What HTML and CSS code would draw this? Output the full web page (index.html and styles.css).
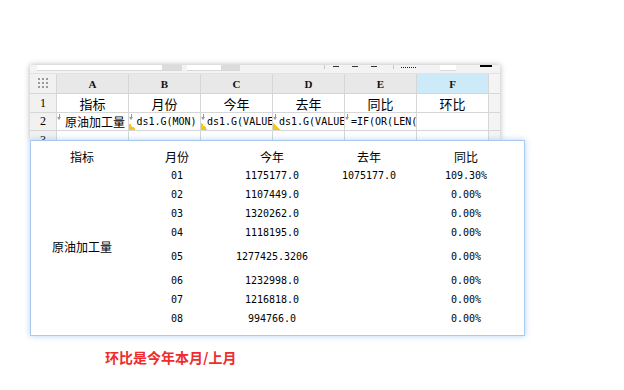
FILE: index.html
```html
<!DOCTYPE html>
<html lang="zh">
<head>
    <meta charset="UTF-8">
    <title>环比</title>
    <link rel="stylesheet" href="styles.css">
</head>
<body>

    <!-- designer screenshot -->
    <div class="sheet">
        <div class="toolbar">
            <span class="tb-input w125"></span><span class="tb-scroll w20"></span>
            <span class="tb-input w34 gap5"></span><span class="tb-scroll w19"></span>
            <span class="tb-sep gap84"></span>
            <span class="tb-dash gap8"></span><span class="tb-dash gap13"></span><span class="tb-dash gap13"></span>
            <span class="tb-sep gap16"></span>
            <span class="tb-dots gap7"></span>
            <span class="tb-input w16 gap24"></span>
            <span class="tb-black gap24"></span>
        </div>
        <div class="grid">
            <div class="hd corner">
                <svg width="11" height="11" viewBox="0 0 11 11">
                    <g fill="#9a9a9a">
                        <rect x="0" y="0" width="2" height="2"/><rect x="4" y="0" width="2" height="2"/><rect x="8" y="0" width="2" height="2"/>
                        <rect x="0" y="4" width="2" height="2"/><rect x="4" y="4" width="2" height="2"/><rect x="8" y="4" width="2" height="2"/>
                        <rect x="0" y="8" width="2" height="2"/><rect x="4" y="8" width="2" height="2"/><rect x="8" y="8" width="2" height="2"/>
                    </g>
                </svg>
            </div>
            <div class="hd">A</div>
            <div class="hd">B</div>
            <div class="hd">C</div>
            <div class="hd">D</div>
            <div class="hd">E</div>
            <div class="hd sel">F</div>
            <div class="hd rest"></div>

            <div class="rn">1</div>
            <div class="cell center">指标</div>
            <div class="cell center">月份</div>
            <div class="cell center">今年</div>
            <div class="cell center">去年</div>
            <div class="cell center">同比</div>
            <div class="cell center">环比</div>
            <div class="cell rest"></div>

            <div class="rn">2</div>
            <div class="cell expand shift">原油加工量</div>
            <div class="cell code center expand flag">ds1.G(MON)</div>
            <div class="cell code expand flag">ds1.G(VALUE</div>
            <div class="cell code expand flag">ds1.G(VALUE</div>
            <div class="cell code expand">=IF(OR(LEN(</div>
            <div class="cell"></div>
            <div class="cell rest"></div>

            <div class="rn">3</div>
            <div class="cell"></div>
            <div class="cell"></div>
            <div class="cell"></div>
            <div class="cell"></div>
            <div class="cell"></div>
            <div class="cell"></div>
            <div class="cell rest"></div>
        </div>
    </div>

    <!-- preview result -->
    <div class="panel">
        <table class="result">
            <colgroup>
                <col class="w-name"><col class="w-mon"><col class="w-now"><col class="w-last"><col class="w-rate">
            </colgroup>
            <tr class="head">
                <td>指标</td><td>月份</td><td>今年</td><td>去年</td><td>同比</td>
            </tr>
            <tr>
                <td rowspan="8" class="name">原油加工量</td>
                <td class="num">01</td><td class="num">1175177.0</td><td class="num">1075177.0</td><td class="num">109.30%</td>
            </tr>
            <tr><td class="num">02</td><td class="num">1107449.0</td><td></td><td class="num">0.00%</td></tr>
            <tr><td class="num">03</td><td class="num">1320262.0</td><td></td><td class="num">0.00%</td></tr>
            <tr><td class="num">04</td><td class="num">1118195.0</td><td></td><td class="num">0.00%</td></tr>
            <tr class="tall"><td class="num">05</td><td class="num">1277425.3206</td><td></td><td class="num">0.00%</td></tr>
            <tr><td class="num">06</td><td class="num">1232998.0</td><td></td><td class="num">0.00%</td></tr>
            <tr><td class="num">07</td><td class="num">1216818.0</td><td></td><td class="num">0.00%</td></tr>
            <tr><td class="num">08</td><td class="num">994766.0</td><td></td><td class="num">0.00%</td></tr>
        </table>
    </div>

    <p class="note">环比是今年本月/上月</p>

</body>
</html>
```

FILE: styles.css
```css
body {
    margin: 0;
    padding-top: 65px;
    background: #fff;
    color: #000;
    font-family: "Noto Sans CJK SC", "Noto Sans", sans-serif;
}

/* ---- sheet screenshot ---- */

.sheet {
    margin-left: 30px;
    width: 470px;
    height: 75px;
    overflow: hidden;
    background: #fff;
    box-shadow: 0 0 6px rgba(0, 0, 0, 0.3);
}

.toolbar {
    display: flex;
    align-items: flex-start;
    height: 9px;
    background: #f3f3f3;
    box-sizing: border-box;
    border-bottom: 1px solid #e2e2e2;
}

.tb-input {
    height: 5px;
    background: #fff;
    border-bottom: 1px solid #d8d8d8;
}

.tb-scroll {
    height: 5px;
    background: #dcdcdc;
    border-bottom: 1px solid #d8d8d8;
}

.tb-sep {
    width: 1px;
    height: 4px;
    background: #c8c8c8;
}

.tb-dash {
    width: 6px;
    height: 1px;
    margin-top: 1px;
    background: #333;
}

.tb-dots {
    width: 15px;
    height: 0;
    margin-top: 2px;
    border-top: 1px dotted #222;
}

.tb-black {
    width: 12px;
    height: 2px;
    background: #000;
}

.w125 { width: 125px; margin-left: 7px; }
.w20 { width: 20px; }
.w34 { width: 34px; }
.w19 { width: 19px; }
.w16 { width: 16px; }
.gap5 { margin-left: 5px; }
.gap7 { margin-left: 7px; }
.gap8 { margin-left: 8px; }
.gap13 { margin-left: 13px; }
.gap16 { margin-left: 16px; }
.gap24 { margin-left: 24px; }
.gap84 { margin-left: 84px; }

.grid {
    display: grid;
    grid-template-columns: 27px repeat(6, 72px) 11px;
    grid-template-rows: 20px 19px 18px 19px;
}

.grid > div {
    box-sizing: border-box;
    border-right: 1px solid #d6d6d6;
    border-bottom: 1px solid #d6d6d6;
    display: flex;
    align-items: center;
    white-space: nowrap;
    overflow: hidden;
    position: relative;
}

.hd {
    justify-content: center;
    background: #e8e8e8;
    font-family: "Liberation Serif", serif;
    font-size: 11px;
    font-weight: bold;
    color: #111;
}

.hd.corner {
    background: #f1f1f1;
}

.hd.sel {
    background: #cdeaf8;
}

.hd.rest,
.cell.rest {
    background: #f4f4f4;
    border-right: none;
}

.rn {
    justify-content: center;
    background: #f1f1f1;
    font-family: "Liberation Serif", serif;
    font-size: 12px;
}

.cell {
    font-size: 13px;
    padding-left: 6px;
}

.cell.center {
    justify-content: center;
    padding-left: 0;
}

.cell.shift {
    font-size: 12px;
    padding-left: 8px;
}

.cell.code {
    font-family: "DejaVu Sans Mono", monospace;
    font-size: 10px;
}

.cell.code.center {
    padding-left: 4px;
}

/* little down arrow for expanding cells */
.expand::before {
    content: "";
    position: absolute;
    left: 2px;
    top: 1px;
    width: 1px;
    height: 4px;
    background: #999;
}

.expand::after {
    content: "";
    position: absolute;
    left: 0;
    top: 4px;
    border-left: 2.5px solid transparent;
    border-right: 2.5px solid transparent;
    border-top: 3px solid #999;
}

/* yellow corner flag */
.flag {
    background-image: linear-gradient(45deg, #f5c518 50%, transparent 50%);
    background-size: 7px 7px;
    background-position: left bottom;
    background-repeat: no-repeat;
}

/* ---- preview panel ---- */

.panel {
    position: relative;
    z-index: 1;
    margin-left: 30px;
    width: 495px;
    height: 196px;
    box-sizing: border-box;
    padding-top: 7px;
    background: #fff;
    border: 1px solid #a9c9ee;
    box-shadow: 0 0 6px rgba(90, 150, 230, 0.45);
}

.result {
    border-collapse: collapse;
    table-layout: fixed;
    width: 486px;
}

.w-name { width: 102px; }
.w-mon { width: 88px; }
.w-now { width: 102px; }
.w-last { width: 92px; }
.w-rate { width: 102px; }

.result td {
    padding: 0;
    height: 19px;
    text-align: center;
    vertical-align: middle;
    font-size: 12px;
    line-height: 14px;
    white-space: nowrap;
}

.result tr.head td {
    height: 18px;
}

.result tr.tall td {
    height: 29px;
}

.result td.num {
    font-family: "DejaVu Sans Mono", monospace;
    font-size: 10px;
}

.result td.name {
    font-size: 12px;
}

.note {
    margin: 13px 0 0 105px;
    font-size: 14px;
    line-height: 16px;
    font-weight: bold;
    color: #ef2b2d;
}
```
